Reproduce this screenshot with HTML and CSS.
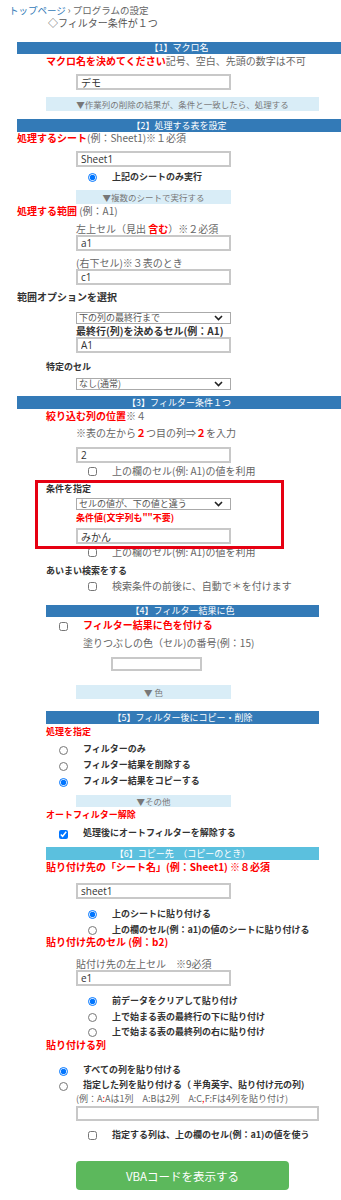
FILE: index.html
```html
<!DOCTYPE html>
<html lang="ja">
<head>
  <meta charset="UTF-8">
  <title>プログラムの設定</title>
  <link rel="stylesheet" href="styles.css">
</head>
<body>

  <div class="breadcrumb"><a href="#">トップページ</a><span class="sep">›</span>プログラムの設定</div>
  <div class="subtitle">◇フィルター条件が１つ</div>

  <!-- 1 -->
  <div class="head full mt13">【1】マクロ名</div>
  <div class="line l1 mt1"><span class="red b">マクロ名を決めてください</span>記号、空白、先頭の数字は不可</div>
  <input class="field mt7" type="text" value="デモ">
  <div class="info wide mt7">▼作業列の削除の結果が、条件と一致したら、処理する</div>

  <!-- 2 -->
  <div class="head full h13 mt8">【2】処理する表を設定</div>
  <div class="line l0"><span class="red b">処理するシート</span>(例：Sheet1)※１必須</div>
  <input class="field mt7" type="text" value="Sheet1">
  <label class="opt o2 mt4"><input type="radio" name="sheet" checked><span class="dark">上記のシートのみ実行</span></label>
  <div class="info mt7">▼複数のシートで実行する</div>

  <div class="line l0 mt1"><span class="red b">処理する範囲</span> (例：A1)</div>
  <div class="line l2 mt6">左上セル（見出 <span class="red b">含む</span>）※２必須</div>
  <input class="field" type="text" value="a1">
  <div class="line l2 mt6">(右下セル)※３表のとき</div>
  <input class="field" type="text" value="c1">
  <div class="line l0 label mt6">範囲オプションを選択</div>
  <div class="select mt9">
    <select><option>下の列の最終行まで</option></select>
    <svg class="chev" width="9" height="6" viewBox="0 0 9 6"><path d="M1 1l3.5 3.5L8 1" fill="none" stroke="#222" stroke-width="1.6"/></svg>
  </div>
  <div class="line l2 label mt1">最終行(列)を決めるセル(例：A1)</div>
  <input class="field" type="text" value="A1">
  <div class="line l1 label sm mt8">特定のセル</div>
  <div class="select mt5">
    <select><option>なし(通常)</option></select>
    <svg class="chev" width="9" height="6" viewBox="0 0 9 6"><path d="M1 1l3.5 3.5L8 1" fill="none" stroke="#222" stroke-width="1.6"/></svg>
  </div>

  <!-- 3 -->
  <div class="head full h13 mt6">【3】フィルター条件１つ</div>
  <div class="line l1 mt1"><span class="red b">絞り込む列の位置</span>※４</div>
  <div class="line l2 mt5">※表の左から<span class="red b">２</span>つ目の列⇒<span class="red b">２</span>を入力</div>
  <input class="field mt8" type="text" value="2">
  <label class="opt o2 mt2"><input type="checkbox"><span>上の欄のセル(例: A1)の値を利用</span></label>
  <div class="line l1 label sm mt6">条件を指定</div>
  <div class="select h13 mt3">
    <select><option>セルの値が、下の値と違う</option></select>
    <svg class="chev" width="9" height="6" viewBox="0 0 9 6"><path d="M1 1l3.5 3.5L8 1" fill="none" stroke="#222" stroke-width="1.6"/></svg>
  </div>
  <div class="line l2 red b sm mt2">条件値(文字列も""不要)</div>
  <input class="field mt4" type="text" value="みかん">
  <label class="opt o2 mt2"><input type="checkbox"><span>上の欄のセル(例: A1)の値を利用</span></label>
  <div class="line l1 label sm mt7">あいまい検索をする</div>
  <label class="opt o2 mt3"><input type="checkbox"><span>検索条件の前後に、自動で＊を付けます</span></label>

  <!-- 4 -->
  <div class="head mt13">【4】フィルター結果に色</div>
  <label class="opt o1 mt2"><input type="checkbox"><span class="red b big">フィルター結果に色を付ける</span></label>
  <div class="line l1x mt6">塗りつぶしの色（セル)の番号(例：15)</div>
  <input class="field short mt8" type="text">
  <div class="info mt14">▼ 色</div>

  <!-- 5 -->
  <div class="head h13 mt12">【5】フィルター後にコピー・削除</div>
  <div class="line l1 red b sm mt2">処理を指定</div>
  <label class="opt o1 mt5"><input type="radio" name="proc"><span class="dark">フィルターのみ</span></label>
  <label class="opt o1 mt4"><input type="radio" name="proc"><span class="dark">フィルター結果を削除する</span></label>
  <label class="opt o1 mt4"><input type="radio" name="proc" checked><span class="dark">フィルター結果をコピーする</span></label>
  <div class="info h12 mt8">▼その他</div>
  <div class="line l1 red b sm mt2">オートフィルター解除</div>
  <label class="opt o1 mt6"><input type="checkbox" checked><span class="dark">処理後にオートフィルターを解除する</span></label>

  <!-- 6 -->
  <div class="head light h13 mt8">【6】コピー先　（コピーのとき）</div>
  <div class="line l1 red b mt1">貼り付け先の「シート名」(例：Sheet1) ※８必須</div>
  <input class="field mt10" type="text" value="sheet1">
  <label class="opt o2 mt9"><input type="radio" name="dest" checked><span class="dark">上のシートに貼り付ける</span></label>
  <label class="opt o2 mt4"><input type="radio" name="dest"><span class="dark">上の欄のセル(例：a1)の値のシートに貼り付ける</span></label>
  <div class="line l1 red b">貼り付け先のセル (例：b2)</div>
  <div class="line l2 mt10">貼付け先の左上セル　※9必須</div>
  <input class="field" type="text" value="e1">
  <label class="opt o2 mt9"><input type="radio" name="mode" checked><span class="dark">前データをクリアして貼り付け</span></label>
  <label class="opt o2 mt4"><input type="radio" name="mode"><span class="dark">上で始まる表の最終行の下に貼り付け</span></label>
  <label class="opt o2 mt3"><input type="radio" name="mode"><span class="dark">上で始まる表の最終列の右に貼り付け</span></label>
  <div class="line l1 red b mt1">貼り付ける列</div>
  <label class="opt o1 mt13"><input type="radio" name="cols" checked><span class="dark">すべての列を貼り付ける</span></label>
  <label class="opt o1 mt3"><input type="radio" name="cols"><span class="dark">指定した列を貼り付ける（ 半角英字、貼り付け元の列)</span></label>
  <div class="line l2 sm mt2">(例：A<span class="red">:</span>Aは1列　A:Bは2列　A:C<span class="red">,</span>F:Fは4列を貼り付け)</div>
  <input class="field long mt1" type="text">
  <label class="opt o2 mt8"><input type="checkbox"><span class="dark">指定する列は、上の欄のセル(例：a1)の値を使う</span></label>

  <button class="run mt20">VBAコードを表示する</button>

  <div class="mark"></div>

</body>
</html>
```

FILE: styles.css
```css
body {
  margin: 0;
  padding-top: 4px;
  font-family: "Noto Sans CJK JP", "Noto Sans", sans-serif;
  font-size: 10px;
  line-height: 12px;
  color: #666;
  background: #fff;
}
.breadcrumb {
  margin-left: 9px;
  height: 12px;
  font-size: 9.5px;
  color: #666;
}
.breadcrumb a {
  color: #337ab7;
  text-decoration: none;
}
.sep {
  margin: 0 2px;
}
.subtitle {
  margin: 1px 0 0 48px;
  height: 12px;
  color: #555;
}

/* section bars */
.head {
  margin-left: 46px;
  width: 273px;
  height: 12px;
  background: #337ab7;
  color: #fff;
  font-size: 9px;
  line-height: 12px;
  text-align: center;
}
.head.full {
  margin-left: 17px;
  width: 324px;
}
.head.light {
  background: #5bc0de;
}
.info {
  margin-left: 76px;
  width: 155px;
  height: 14px;
  background: #d9edf7;
  color: #777;
  font-size: 8.5px;
  line-height: 14px;
  text-align: center;
}
.info.wide {
  margin-left: 46px;
  width: 273px;
}
.h12 { height: 12px; line-height: 12px; }
.h13 { height: 13px; line-height: 13px; }

/* text lines */
.line {
  height: 12px;
  white-space: nowrap;
}
.l0 { margin-left: 17px; }
.l1 { margin-left: 46px; }
.l1x { margin-left: 83px; }
.l2 { margin-left: 76px; }
.red { color: #f00; }
.b { font-weight: bold; }
.sm { font-size: 9px; }
.big { font-size: 10px; }
.label {
  color: #333;
  font-weight: bold;
}
.dark {
  color: #333;
  font-weight: bold;
  font-size: 9px;
}

/* inputs */
.field {
  display: block;
  box-sizing: border-box;
  margin-left: 76px;
  width: 155px;
  height: 16px;
  padding: 0 3px;
  border: 2px solid #c8c8c8;
  font-family: "Open Sans", "Noto Sans CJK JP", sans-serif;
  font-size: 10px;
  color: #333;
  outline: none;
}
.field.short {
  margin-left: 111px;
  width: 91px;
  height: 14px;
}
.field.long {
  width: 243px;
  height: 15px;
}
.select {
  position: relative;
  margin-left: 76px;
  width: 155px;
  height: 12px;
}
.select select {
  appearance: none;
  box-sizing: border-box;
  display: block;
  width: 100%;
  height: 100%;
  margin: 0;
  padding: 0 2px;
  border: 1px solid #aaa;
  border-radius: 0;
  background: #fff;
  font-family: "Noto Sans CJK JP", "Noto Sans", sans-serif;
  font-size: 9px;
  line-height: 10px;
  color: #555;
}
.select .chev {
  position: absolute;
  right: 8px;
  top: 50%;
  margin-top: -3px;
}

/* radios and checkboxes */
.opt {
  display: flex;
  align-items: center;
  gap: 15px;
  height: 12px;
  white-space: nowrap;
}
.o1 { margin-left: 59px; }
.o2 { margin-left: 88px; }
.opt input {
  width: 9px;
  height: 9px;
  margin: 0;
  flex: none;
}
.o1 input { margin-top: 3px; }

.run {
  display: block;
  margin-left: 76px;
  width: 213px;
  height: 29px;
  border: none;
  border-radius: 4px;
  background: #5cb85c;
  color: #fff;
  font-family: "Noto Sans CJK JP", "Noto Sans", sans-serif;
  font-size: 11.5px;
}

/* spacing */
.mt1 { margin-top: 1px; }
.mt2 { margin-top: 2px; }
.mt3 { margin-top: 3px; }
.mt4 { margin-top: 4px; }
.mt5 { margin-top: 5px; }
.mt6 { margin-top: 6px; }
.mt7 { margin-top: 7px; }
.mt8 { margin-top: 8px; }
.mt9 { margin-top: 9px; }
.mt10 { margin-top: 10px; }
.mt12 { margin-top: 12px; }
.mt13 { margin-top: 13px; }
.mt14 { margin-top: 14px; }
.mt20 { margin-top: 20px; }

/* red annotation frame drawn over the form */
.mark {
  position: absolute;
  left: 35px;
  top: 480px;
  width: 249px;
  height: 69px;
  box-sizing: border-box;
  border: 3px solid #e60012;
}
```
